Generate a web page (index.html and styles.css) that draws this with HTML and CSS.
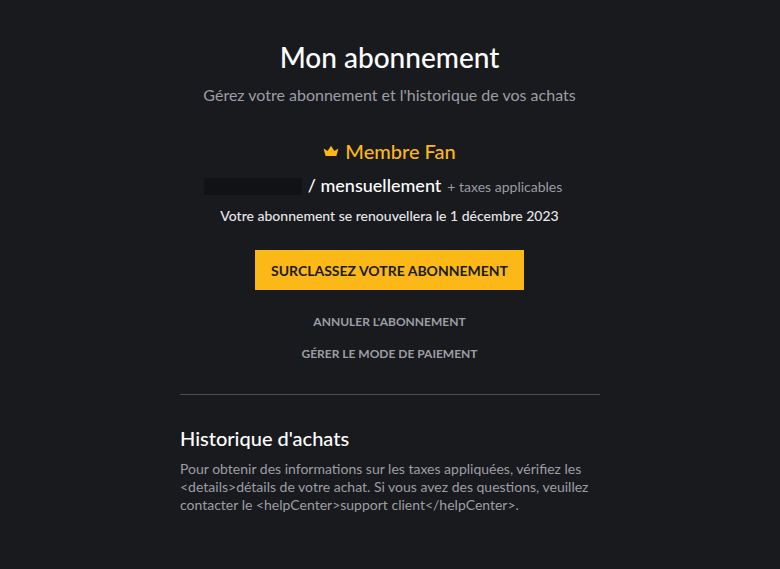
FILE: index.html
```html
<!DOCTYPE html>
<html lang="fr">
<head>
    <meta charset="UTF-8">
    <meta name="viewport" content="width=device-width, initial-scale=1.0">
    <title>Mon abonnement</title>
    <link rel="stylesheet" href="styles.css">
</head>
<body>
    <div class="page">
        <h1>Mon abonnement</h1>
        <p class="subtitle">Gérez votre abonnement et l'historique de vos achats</p>

        <div class="plan-name">
            <svg class="crown" viewBox="0 0 16 12" width="16" height="12">
                <path fill="#fcb817" d="M2.6 11 .6 3.4 4.6 6 8 .8l3.4 5.2 4-2.6L13.4 11z"/>
            </svg>
            <span>Membre Fan</span>
        </div>

        <div class="price-row">
            <span class="price-hidden"></span>
            <span class="price-period">/ mensuellement</span>
            <span class="price-tax">+ taxes applicables</span>
        </div>
        <p class="renewal">Votre abonnement se renouvellera le 1 décembre 2023</p>

        <a class="upgrade-btn" href="#">SURCLASSEZ VOTRE ABONNEMENT</a>
        <a class="link-btn first" href="#">ANNULER L'ABONNEMENT</a>
        <a class="link-btn" href="#">GÉRER LE MODE DE PAIEMENT</a>

        <hr class="divider">

        <h2>Historique d'achats</h2>
        <p class="history-text">Pour obtenir des informations sur les taxes appliquées, vérifiez les &lt;details&gt;détails de votre achat. Si vous avez des questions, veuillez contacter le &lt;helpCenter&gt;support client&lt;/helpCenter&gt;.</p>
    </div>
</body>
</html>
```

FILE: styles.css
```css
body {
    margin: 0;
    background: #191a1e;
    font-family: Lato, sans-serif;
    color: #fff;
}

.page {
    width: 419px;
    margin: 0 auto;
    padding: 39px 1px 0 0;
    display: flex;
    flex-direction: column;
    align-items: center;
}

h1 {
    margin: 0;
    font-size: 28px;
    line-height: 36px;
    font-weight: 500;
}

.subtitle {
    margin: 10px 0 0;
    font-size: 16px;
    line-height: 20px;
    color: #9d9ea4;
}

.plan-name {
    margin-top: 32px;
    display: flex;
    align-items: center;
    gap: 6px;
    font-size: 20px;
    line-height: 28px;
    font-weight: 500;
    color: #fcb817;
}

.price-row {
    margin-top: 8px;
    padding-right: 13px;
    display: flex;
    align-items: baseline;
    line-height: 24px;
}

.price-hidden {
    width: 98px;
    height: 17px;
    margin-right: 6px;
    background: #111215;
    align-self: center;
}

.price-period {
    font-size: 18px;
    font-weight: 500;
}

.price-tax {
    margin-left: 6px;
    font-size: 14px;
    color: #9a9ba2;
}

.renewal {
    margin: 7px 0 0;
    font-size: 14px;
    line-height: 20px;
    font-weight: 500;
    color: #e6e6e8;
}

.upgrade-btn {
    margin-top: 24px;
    width: 269px;
    height: 40px;
    display: flex;
    align-items: center;
    justify-content: center;
    background: #fcb817;
    color: #1a1b1f;
    font-size: 14px;
    font-weight: 700;
    text-decoration: none;
}

.link-btn {
    margin-top: 14px;
    line-height: 18px;
    font-size: 12px;
    font-weight: 700;
    color: #9d9ea4;
    text-decoration: none;
}

.link-btn.first {
    margin-top: 23px;
}

.divider {
    width: 420px;
    margin: 31px -1px 0 0;
    border: none;
    border-top: 1px solid #4a4b53;
}

h2 {
    align-self: flex-start;
    margin: 29px 0 0;
    font-size: 20px;
    line-height: 28px;
    font-weight: 500;
}

.history-text {
    margin: 8px 0 0;
    font-size: 14px;
    line-height: 18px;
    color: #9d9ea4;
}
```
